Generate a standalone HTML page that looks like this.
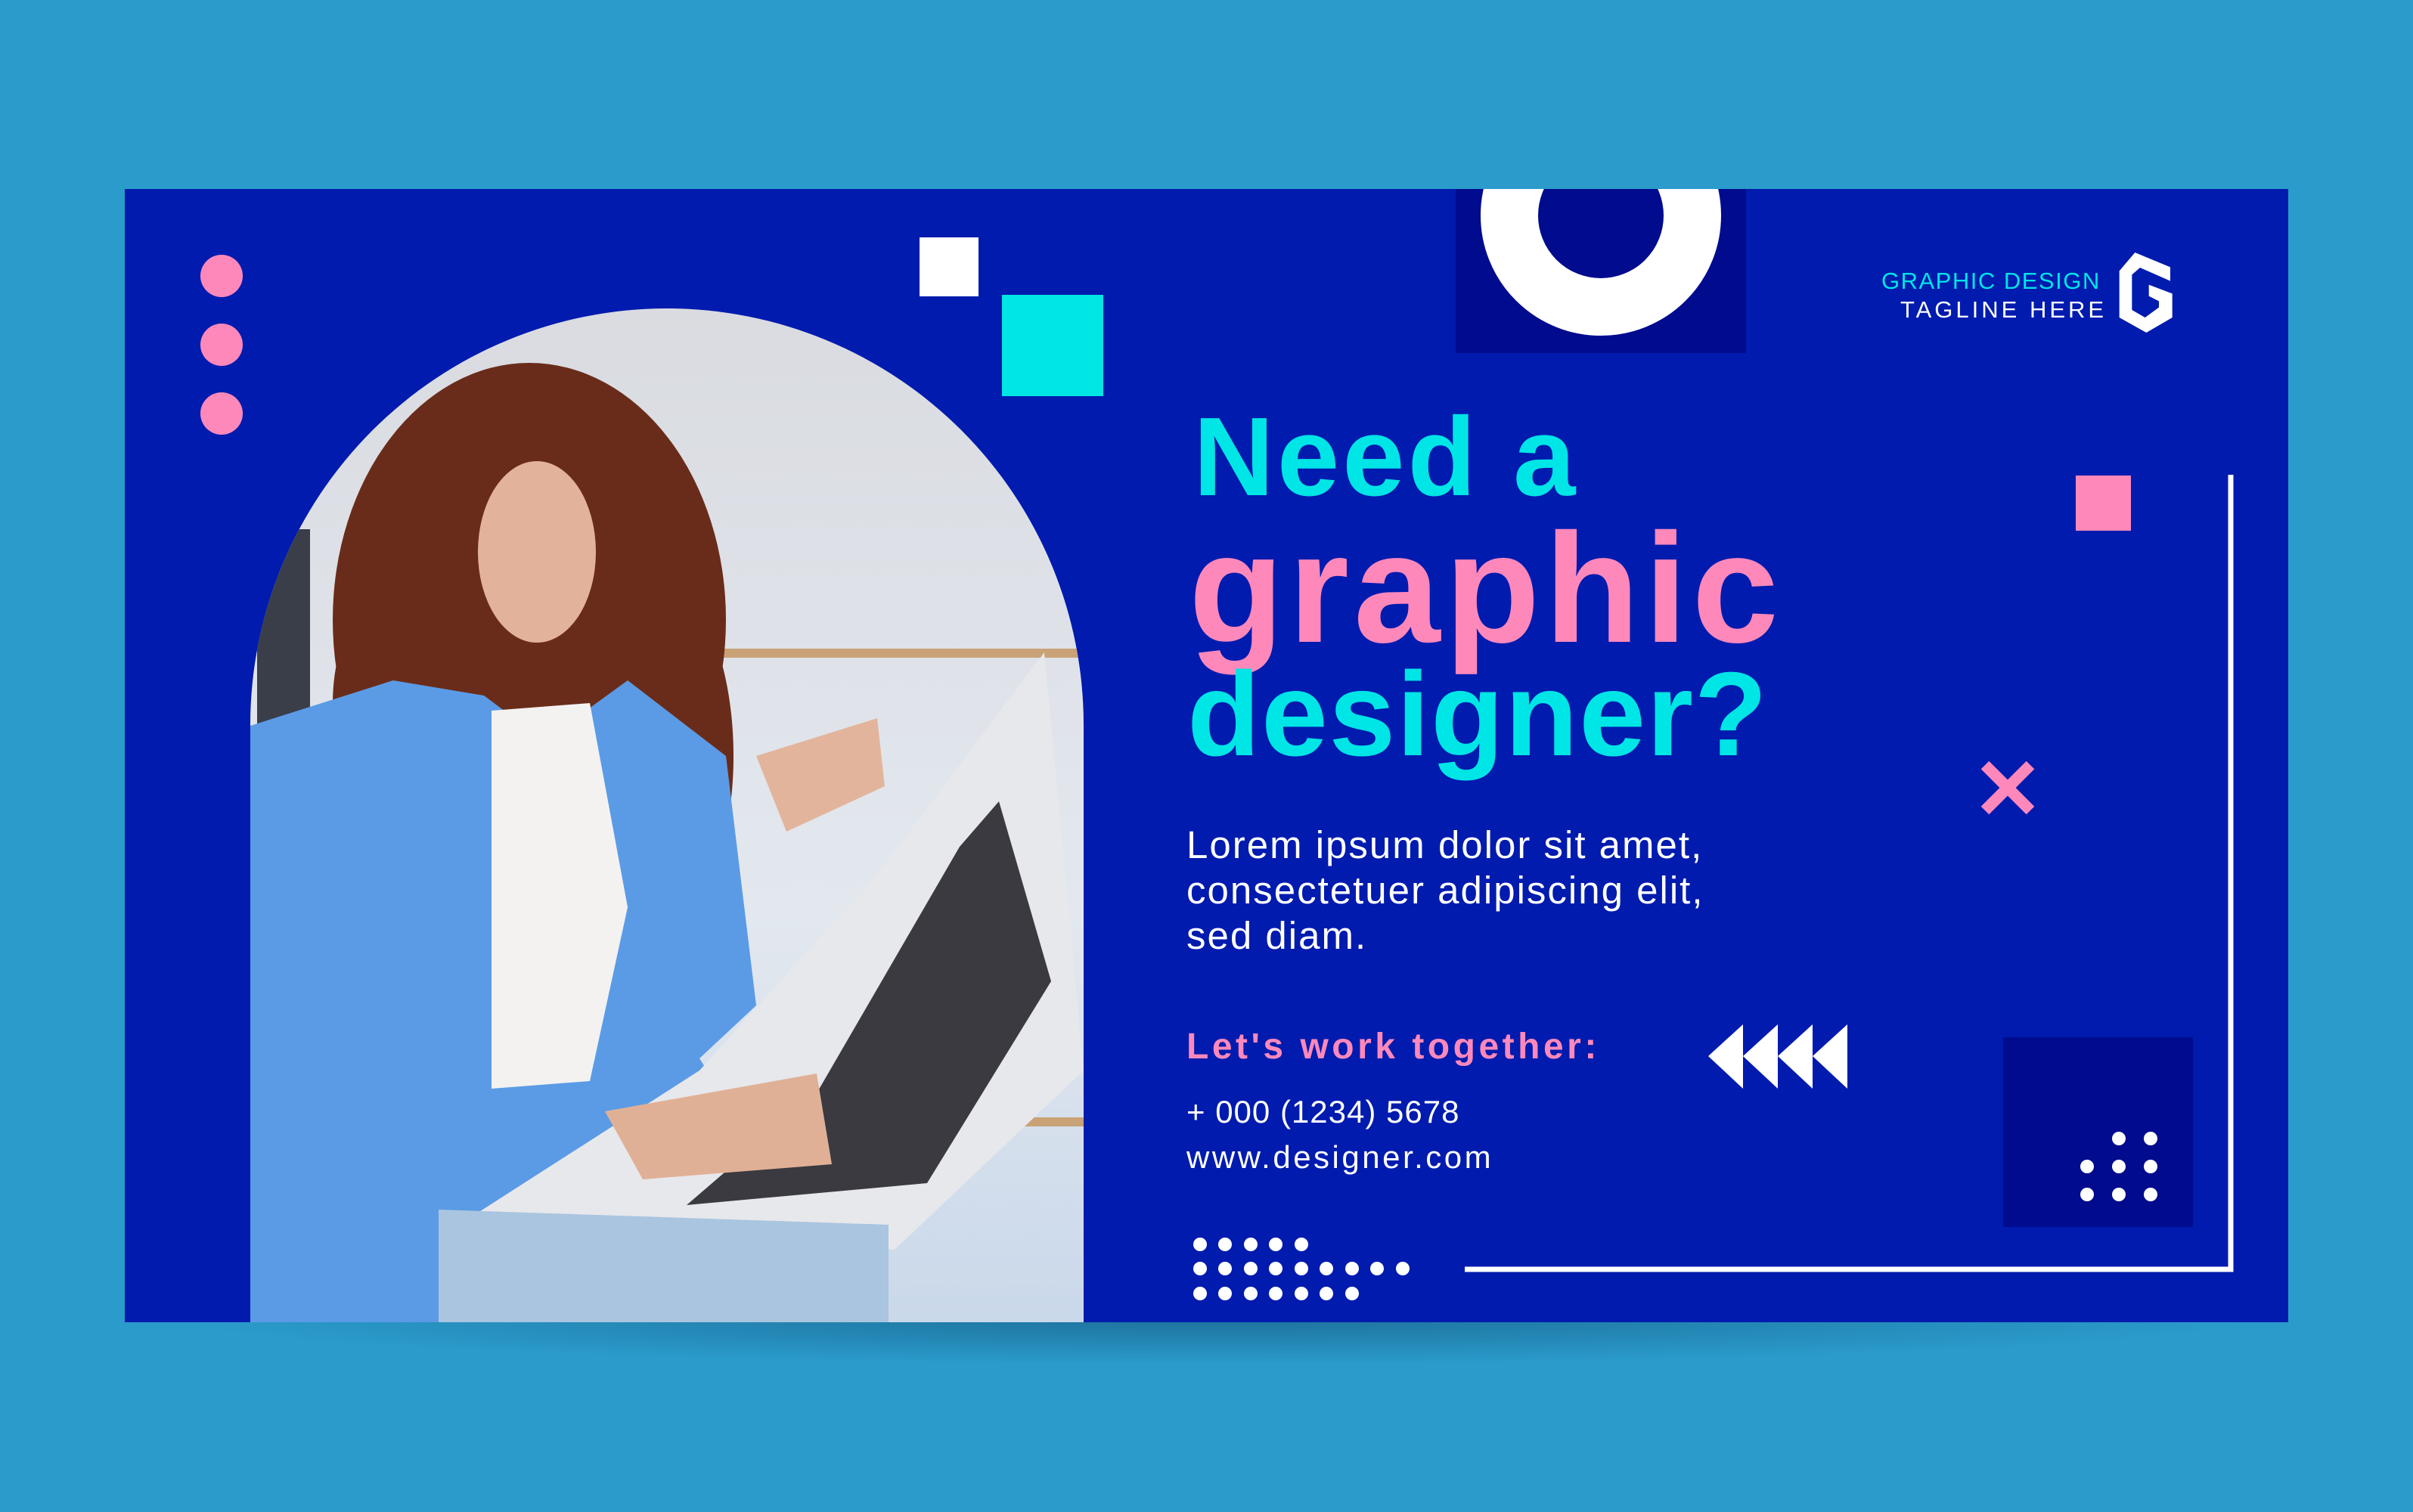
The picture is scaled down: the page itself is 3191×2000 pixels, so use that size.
<!DOCTYPE html>
<html><head><meta charset="utf-8"><style>
html,body{margin:0;padding:0}
body{width:3191px;height:2000px;background:#2a9bcb;position:relative;overflow:hidden;font-family:"Liberation Sans",sans-serif}
.a{position:absolute}
.t{position:absolute;white-space:nowrap;line-height:1}
</style></head><body>
<div class="a" style="left:230px;top:1745px;width:2750px;height:60px;background:radial-gradient(ellipse at 50% 0%,rgba(20,80,120,.55),rgba(42,155,203,0) 70%)"></div>
<div class="a" style="left:165px;top:250px;width:2861px;height:1499px;background:#001bae"></div>
<svg class="a" style="left:0;top:0" width="3191" height="2000">
<defs><clipPath id="arch"><path d="M331,1749 V959 A551,551 0 0 1 1433,959 V1749 Z"/></clipPath>
<linearGradient id="bg" x1="0" y1="0" x2="0" y2="1"><stop offset="0" stop-color="#d9dbe0"/><stop offset="0.6" stop-color="#e3e8ef"/><stop offset="1" stop-color="#c9d8ea"/></linearGradient></defs>
<g clip-path="url(#arch)">
<rect x="331" y="400" width="1102" height="1349" fill="url(#bg)"/>
<rect x="340" y="700" width="70" height="1000" fill="#3a3e48"/>
<rect x="951" y="858" width="482" height="12" fill="#c9a276"/>
<rect x="1240" y="1478" width="193" height="12" fill="#c9a276"/>
<ellipse cx="700" cy="820" rx="260" ry="340" fill="#6a2c1a"/>
<ellipse cx="860" cy="1000" rx="110" ry="240" fill="#6a2c1a"/>
<ellipse cx="560" cy="930" rx="120" ry="180" fill="#6a2c1a"/>
<ellipse cx="710" cy="730" rx="78" ry="120" fill="#e2b39a"/>
<path d="M331,960 L520,900 L640,920 L720,980 L830,900 L960,1000 L1000,1330 L925,1400 L1000,1520 L880,1600 L700,1749 L331,1749 Z" fill="#5b9be6"/>
<path d="M650,940 L780,930 L830,1200 L780,1430 L650,1440 Z" fill="#f3f2f0"/>
<path d="M1000,1000 L1160,950 L1170,1040 L1040,1100 Z" fill="#e3b49c"/>
<path d="M1381,863 L1433,1416 L1183,1653 L632,1604 L925,1416 L1166,1149 Z" fill="#e7e8ec"/>
<path d="M1321,1060 L1390,1298 L1226,1565 L908,1594 L1080,1446 L1269,1120 Z" fill="#3a3a40"/>
<path d="M800,1470 L1080,1420 L1100,1540 L850,1560 Z" fill="#e0b096"/>
<path d="M580,1600 L1175,1620 L1175,1749 L580,1749 Z" fill="#a9c5e0"/>
</g>
<circle cx="293" cy="365" r="28" fill="#ff88bb"/>
<circle cx="293" cy="456" r="28" fill="#ff88bb"/>
<circle cx="293" cy="547" r="28" fill="#ff88bb"/>
<rect x="1216" y="314" width="78" height="78" fill="#fff"/>
<rect x="1325" y="390" width="134" height="134" fill="#00e5e5"/>
<rect x="1925" y="250" width="384" height="217" fill="#000b8e"/>
<clipPath id="rc"><rect x="1925" y="250" width="384" height="217"/></clipPath>
<circle cx="2117" cy="285" r="121" fill="none" stroke="#fff" stroke-width="76" clip-path="url(#rc)"/>
<rect x="2745" y="629" width="73" height="73" fill="#ff88bb"/>
<path d="M2625,1012 L2685,1072 M2685,1012 L2625,1072" stroke="#ff88bb" stroke-width="15"/>
<path d="M2950,628 V1679 H1937" fill="none" stroke="#fff" stroke-width="7"/>
<rect x="2649" y="1372" width="251" height="251" fill="#000b8e"/>
<g fill="#fff">
<circle cx="2802" cy="1506" r="9"/><circle cx="2844" cy="1506" r="9"/>
<circle cx="2760" cy="1543" r="9"/><circle cx="2802" cy="1543" r="9"/><circle cx="2844" cy="1543" r="9"/>
<circle cx="2760" cy="1580" r="9"/><circle cx="2802" cy="1580" r="9"/><circle cx="2844" cy="1580" r="9"/>
<path d="M2259,1397 L2305,1355 V1440 Z M2305,1397 L2351,1355 V1440 Z M2351,1397 L2397,1355 V1440 Z M2397,1397 L2443,1355 V1440 Z"/>
</g>
<svg x="2780" y="320" width="120" height="130" viewBox="0 0 360 390"><path fill="#fff" d="M130,42 L270,100 L270,155 L150,102 L118,130 L118,270 L170,300 L225,260 L225,235 L185,215 L185,170 L278,205 L278,300 L175,360 L68,300 L68,115 Z"/></svg>
<g fill="#fff">
<circle cx="1587" cy="1646" r="9"/><circle cx="1620" cy="1646" r="9"/><circle cx="1654" cy="1646" r="9"/><circle cx="1687" cy="1646" r="9"/><circle cx="1721" cy="1646" r="9"/>
<circle cx="1587" cy="1678" r="9"/><circle cx="1620" cy="1678" r="9"/><circle cx="1654" cy="1678" r="9"/><circle cx="1687" cy="1678" r="9"/><circle cx="1721" cy="1678" r="9"/><circle cx="1754" cy="1678" r="9"/><circle cx="1788" cy="1678" r="9"/><circle cx="1821" cy="1678" r="9"/><circle cx="1855" cy="1678" r="9"/>
<circle cx="1587" cy="1711" r="9"/><circle cx="1620" cy="1711" r="9"/><circle cx="1654" cy="1711" r="9"/><circle cx="1687" cy="1711" r="9"/><circle cx="1721" cy="1711" r="9"/><circle cx="1754" cy="1711" r="9"/><circle cx="1788" cy="1711" r="9"/>
</g></svg>
<div class="t" style="left:2488px;top:356px;font-size:31px;color:#00e5e5;letter-spacing:1.5px">GRAPHIC DESIGN</div>
<div class="t" style="left:2513px;top:394px;font-size:31px;color:#fff;letter-spacing:4px">TAGLINE HERE</div>
<div class="t" style="left:1578px;top:531px;font-size:148px;font-weight:bold;color:#00e5e5;letter-spacing:4px">Need a</div>
<div class="t" style="left:1572px;top:675px;font-size:206px;font-weight:bold;color:#ff88bb;letter-spacing:6px">graphic</div>
<div class="t" style="left:1570px;top:866px;font-size:158px;font-weight:bold;color:#00e5e5;letter-spacing:1.5px">designer?</div>
<div class="t" style="left:1569px;top:1088px;font-size:51px;color:#fff;line-height:60px;letter-spacing:2px">Lorem ipsum dolor sit amet,<br>consectetuer adipiscing elit,<br>sed diam.</div>
<div class="t" style="left:1569px;top:1361px;font-size:48px;font-weight:bold;color:#ff88bb;letter-spacing:4.5px">Let's work together:</div>
<div class="t" style="left:1569px;top:1450px;font-size:42px;color:#fff;letter-spacing:1px">+ 000 (1234) 5678</div>
<div class="t" style="left:1569px;top:1510px;font-size:42px;color:#fff;letter-spacing:3.5px">www.designer.com</div>
</body></html>
